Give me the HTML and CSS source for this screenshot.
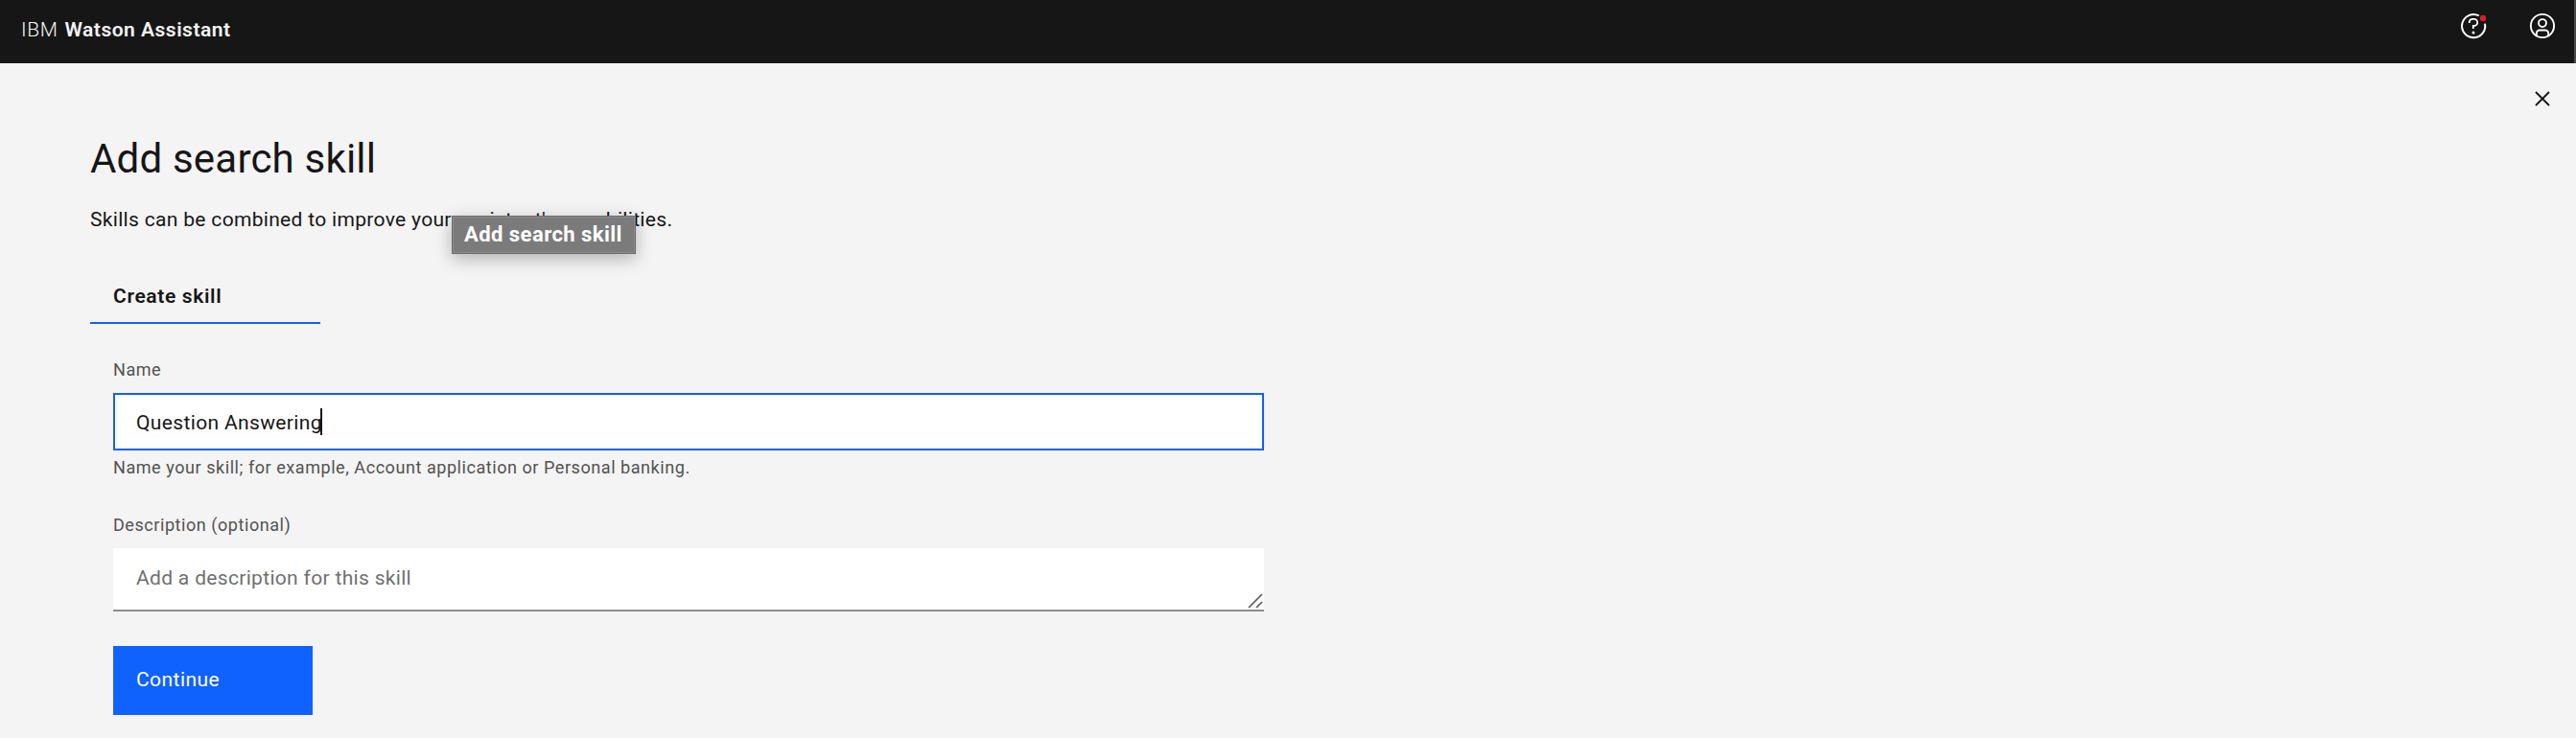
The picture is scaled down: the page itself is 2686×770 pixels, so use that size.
FILE: index.html
```
<!DOCTYPE html>
<html lang="en">
<head>
<meta charset="utf-8">
<title>IBM Watson Assistant</title>
<link rel="stylesheet" href="styles.css">
</head>
<body>
<header class="header">
  <div class="brand"><span class="brand-prefix">IBM</span><span class="brand-name">Watson Assistant</span></div>
  <div class="header-actions">
    <svg class="icon" viewBox="0 0 30 30" aria-label="Help">
      <path d="M20.8 4.4A12.1 12.1 0 1 0 27 12.6" fill="none" stroke="#fff" stroke-width="2"/>
      <path d="M10.8 12v-1.1A3.4 3.4 0 0 1 14.2 7.9h1.6a3.4 3.4 0 0 1 3.4 3.4v.2a3.4 3.4 0 0 1-3.4 3.4h-1v3.2" fill="none" stroke="#fff" stroke-width="1.8"/>
      <circle cx="15" cy="22" r="1.5" fill="#fff"/>
      <circle cx="25" cy="7" r="3.2" fill="#da1e28"/>
    </svg>
    <svg class="icon" viewBox="0 0 30 30" aria-label="User">
      <circle cx="15" cy="15" r="12.1" fill="none" stroke="#fff" stroke-width="1.9"/>
      <circle cx="15" cy="12.1" r="4" fill="none" stroke="#fff" stroke-width="1.9"/>
      <path d="M8.8 25v-2.3a3.2 3.2 0 0 1 3.2-3.2h6a3.2 3.2 0 0 1 3.2 3.2V25" fill="none" stroke="#fff" stroke-width="1.9"/>
    </svg>
  </div>
</header>
<main class="page">
  <svg class="close" viewBox="0 0 16 16" aria-label="Close"><path d="M1 1l14 14M15 1L1 15" fill="none" stroke="#161616" stroke-width="1.8"/></svg>
  <h1 class="title">Add search skill</h1>
  <p class="subtitle">Skills can be combined to improve your assistant's capabilities.<span class="tooltip">Add search skill</span></p>
  <div class="tab">Create skill</div>
  <form class="form">
    <div class="label">Name</div>
    <div class="input">Question Answering<span class="caret"></span></div>
    <div class="label helper">Name your skill; for example, Account application or Personal banking.</div>
    <div class="label desc-label">Description (optional)</div>
    <div class="textarea">Add a description for this skill
      <svg class="grip" viewBox="0 0 16 16"><path d="M1 15L15 1M9 15l6-6" fill="none" stroke="#5c5c5c" stroke-width="1.7"/></svg>
    </div>
    <button class="button" type="button">Continue</button>
  </form>
</main>
</body>
</html>
```
FILE: styles.css
```
* { box-sizing: border-box; }
body {
  margin: 0;
  min-height: 770px;
  background: #f4f4f4;
  color: #161616;
  font: 400 21px/30px Roboto, sans-serif;
  overflow: hidden;
}
.header {
  display: flex;
  justify-content: space-between;
  height: 66px;
  padding: 0 18px 0 22px;
  background: #161616;
  border-right: 2px solid #4c4a48;
  color: #f4f4f4;
}
.brand { display: flex; gap: 7px; padding-top: 16px; }
.brand-prefix { font-weight: 300; letter-spacing: 0.6px; }
.brand-name { font-weight: 600; letter-spacing: 0.5px; }
.header-actions { display: flex; gap: 42px; padding-top: 12px; }
.icon { width: 30px; height: 30px; }
.page { position: relative; padding: 73px 94px 0; }
.close { position: absolute; top: 29px; right: 27px; width: 16px; height: 16px; }
.title { margin: 0; font-size: 42px; line-height: 54px; font-weight: 400; letter-spacing: 0.2px; }
.subtitle { position: relative; margin: 21px 0 0; letter-spacing: 0.32px; }
.tooltip {
  position: absolute;
  left: 377px;
  top: 11px;
  width: 192px;
  height: 40px;
  padding-left: 12px;
  background: #7b7b7b;
  border: 1px solid #6c6c6c;
  box-shadow: inset 0 0 0 1px #8c8c8c, 0 5px 18px rgba(0, 0, 0, 0.28);
  color: #fff;
  font-size: 22px;
  line-height: 38px;
  font-weight: 700;
  letter-spacing: 0.45px;
}
.tab {
  width: 240px;
  margin-top: 46px;
  padding: 4px 24px 12px;
  border-bottom: 2px solid #0f62fe;
  font-weight: 600;
  letter-spacing: 0.65px;
}
.form { width: 1200px; margin: 36px 0 0 24px; }
.label { color: #525252; font-size: 18px; line-height: 24px; letter-spacing: 0.56px; }
.input {
  height: 60px;
  margin-top: 12px;
  padding: 14px 22px;
  background: #fff;
  border: 2px solid #0f62fe;
  letter-spacing: 0.36px;
}
.caret {
  display: inline-block;
  width: 2px;
  height: 28px;
  margin: -6px 0 -6px -2px;
  vertical-align: 0;
  background: #161616;
}
.helper { margin-top: 6px; }
.desc-label { margin-top: 36px; }
.textarea {
  position: relative;
  height: 66px;
  margin-top: 12px;
  padding: 16px 24px;
  background: #fff;
  border-bottom: 2px solid #8d8d8d;
  color: #6f6f6f;
  letter-spacing: 0.32px;
}
.grip { position: absolute; right: 1px; bottom: 1px; width: 16px; height: 16px; }
.button {
  display: block;
  width: 208px;
  height: 72px;
  margin-top: 36px;
  padding: 0 24px 2px;
  background: #0f62fe;
  border: 0;
  color: #fff;
  font: inherit;
  letter-spacing: 0.45px;
  text-align: left;
}
```
